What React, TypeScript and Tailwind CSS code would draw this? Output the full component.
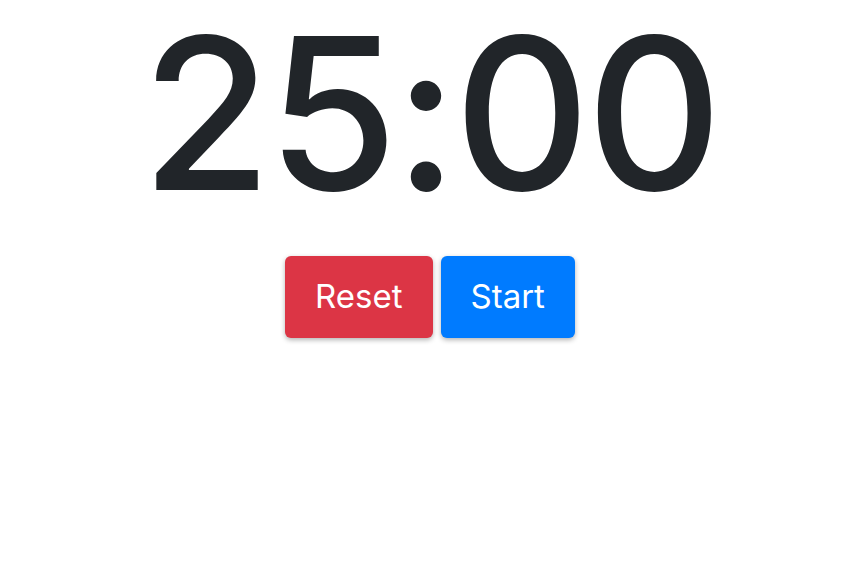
export default function App() {
  return (
    <div className="flex min-h-screen flex-col items-center bg-white font-['Inter',sans-serif]">
      <div className="mt-[8px] text-[211px] leading-none font-medium tracking-[-4px] text-[#212529]">25:00</div>
      <div className="mt-[37px] flex gap-2">
        <button
          type="button"
          className="h-[82px] rounded-md bg-[#dc3545] px-[30px] text-[33px] text-white shadow-[0_2px_5px_rgba(0,0,0,0.3)]"
        >
          Reset
        </button>
        <button
          type="button"
          className="h-[82px] rounded-md bg-[#007bff] px-[30px] text-[33px] text-white shadow-[0_2px_5px_rgba(0,0,0,0.3)]"
        >
          Start
        </button>
      </div>
    </div>
  );
}
